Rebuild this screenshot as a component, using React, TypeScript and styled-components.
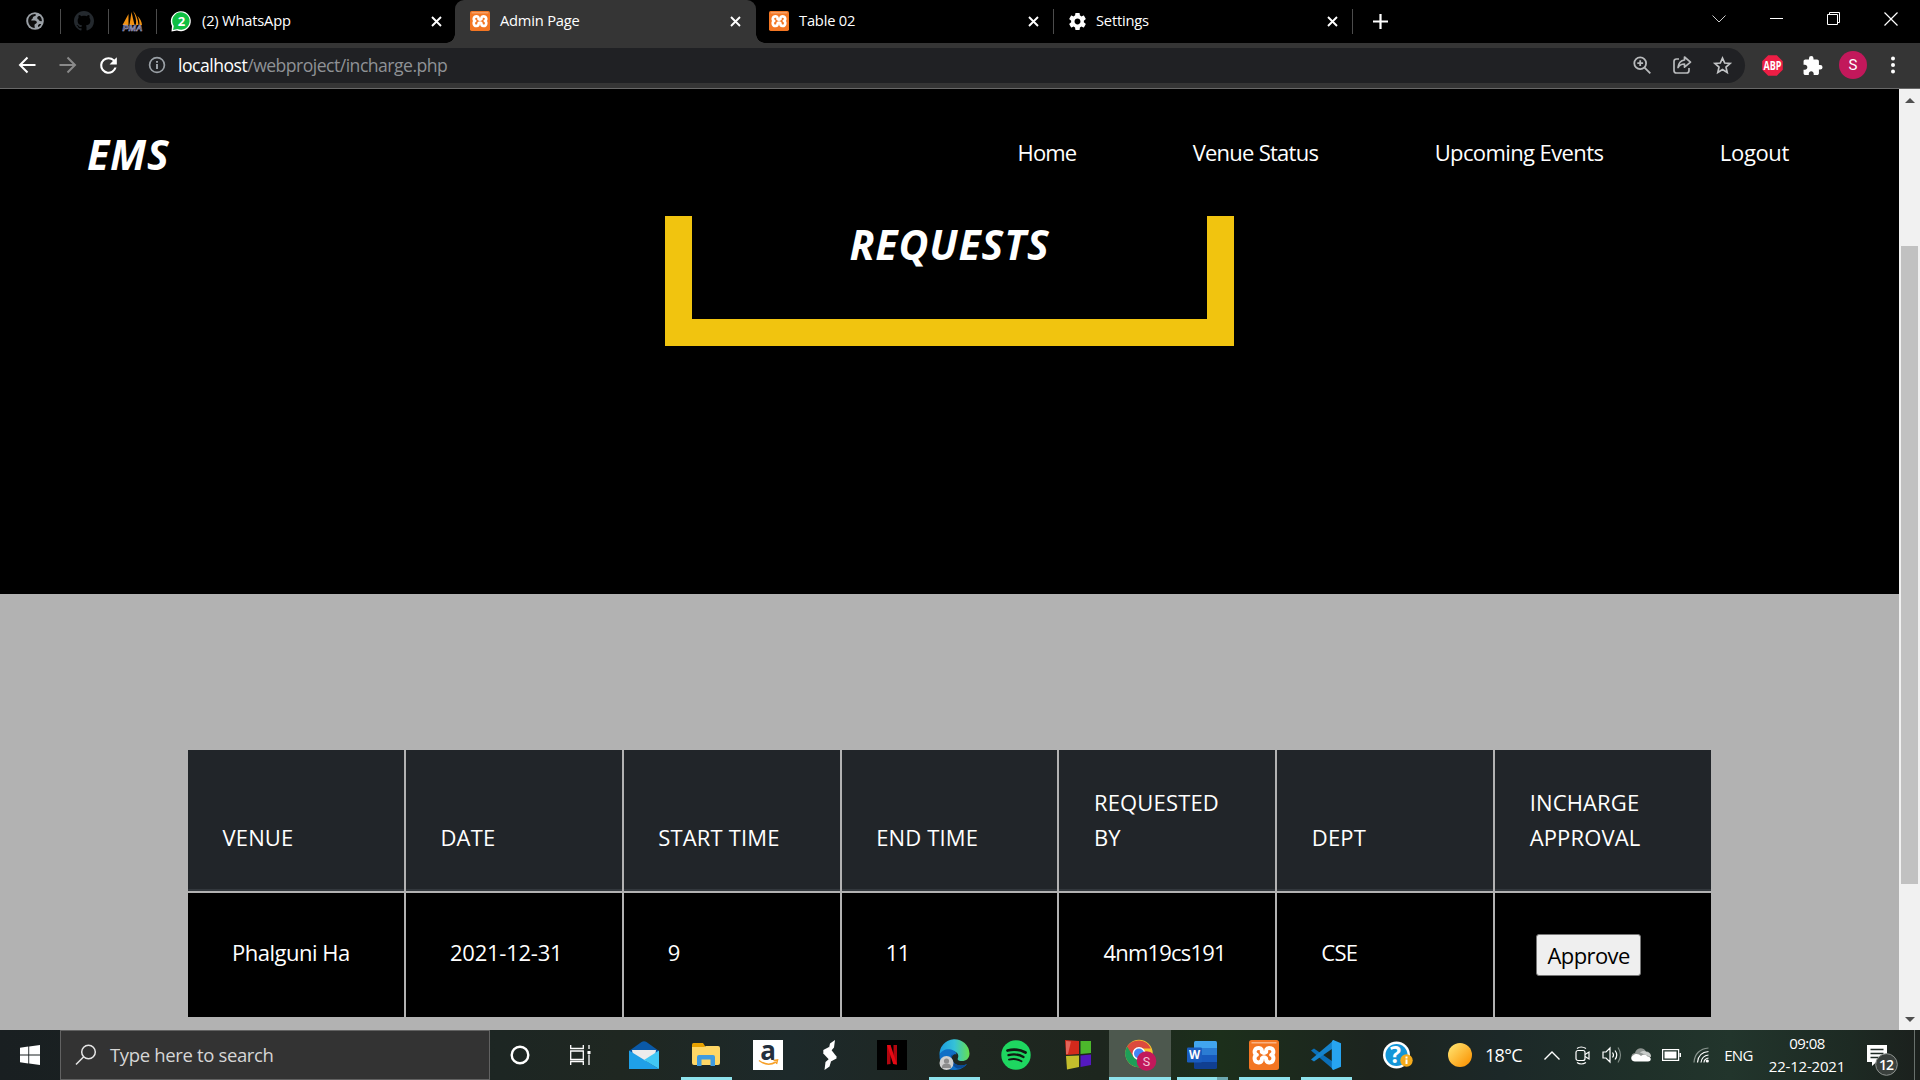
import React from "react";
import styled, { createGlobalStyle } from "styled-components";

const Global = createGlobalStyle`
  * { box-sizing: border-box; }
  html, body { margin: 0; padding: 0; background: #000; overflow: hidden; }
  body { font-family: "Open Sans", "Noto Sans", sans-serif; }
  svg { display: block; flex: none; overflow: visible; }
`;

const Screen = styled.div`
  width: 1920px;
  height: 1080px;
  display: flex;
  flex-direction: column;
  overflow: hidden;
  background: #000;
`;

const Text = styled.span<{ $size: number; $ls?: number; $color?: string }>`
  font-size: ${(p) => p.$size}px;
  letter-spacing: ${(p) => p.$ls ?? 0}px;
  color: ${(p) => p.$color ?? "#fff"};
  white-space: nowrap;
  line-height: 1.36;
`;

/* ---------- tab strip ---------- */
const TabStrip = styled.div`
  height: 43px;
  flex: none;
  display: flex;
  background: #000;
`;
const PinnedTab = styled.div<{ $w: number; $pl: number }>`
  width: ${(p) => p.$w}px;
  padding-left: ${(p) => p.$pl}px;
  padding-bottom: 1px;
  display: flex;
  align-items: center;
`;
const Divider = styled.div`
  width: 1px;
  height: 25px;
  margin-top: 9px;
  background: #4c4c4c;
`;
const Tab = styled.div<{ $w: number; $pl: number; $pr?: number; $active?: boolean }>`
  width: ${(p) => p.$w}px;
  padding: 0 ${(p) => p.$pr ?? 14}px 1px ${(p) => p.$pl}px;
  display: flex;
  align-items: center;
  gap: 10px;
  background: ${(p) => (p.$active ? "#353535" : "#000")};
  border-radius: ${(p) => (p.$active ? "9px 9px 0 0" : "0")};
`;
const TabTitle = styled.span`
  font-size: 14.7px;
  letter-spacing: -0.2px;
  line-height: 20px;
  padding-bottom: 2px;
  color: #fff;
  white-space: nowrap;
`;
const TabClose = styled.div`
  margin-left: auto;
`;
const Foot = styled.div<{ $side: "left" | "right" }>`
  width: 9px;
  align-self: flex-end;
  height: 9px;
  background: radial-gradient(
    circle at ${(p) => (p.$side === "left" ? "0 0" : "100% 0")},
    #000 8.5px,
    #353535 9px
  );
`;
const WindowButtons = styled.div`
  margin-left: auto;
  height: 37px;
  display: flex;
`;
const WindowButton = styled.div`
  width: 57.3px;
  display: flex;
  align-items: center;
  justify-content: center;
`;
const NewTab = styled.div`
  width: 55px;
  display: flex;
  align-items: center;
  justify-content: center;
`;

/* ---------- toolbar ---------- */
const Toolbar = styled.div`
  height: 46px;
  flex: none;
  display: flex;
  align-items: center;
  background: #353535;
  border-bottom: 1px solid #686868;
  padding: 0 7px 1px 7px;
`;
const ToolButton = styled.div<{ $w: number }>`
  width: ${(p) => p.$w}px;
  display: flex;
  align-items: center;
  justify-content: center;
`;
const Omnibox = styled.div`
  width: 1610px;
  height: 35px;
  margin: 0 7px 0 7px;
  border-radius: 18px;
  background: #202124;
  display: flex;
  align-items: center;
  padding-left: 13px;
`;
const Url = styled.div`
  margin-left: 12px;
  display: flex;
  padding-top: 1px;
`;
const OmniActions = styled.div`
  margin-left: auto;
  padding-right: 3px;
  display: flex;
`;
const Avatar = styled.div`
  width: 28px;
  height: 28px;
  border-radius: 50%;
  background: #c2185b;
  color: #fff;
  font: 15px/28px Roboto, sans-serif;
  text-align: center;
`;

/* ---------- page ---------- */
const Viewport = styled.div`
  height: 941px;
  flex: none;
  display: flex;
`;
const Page = styled.main`
  width: 1899px;
  height: 941px;
  overflow: hidden;
  display: flex;
  flex-direction: column;
  background: #b2b2b2;
`;
const Nav = styled.nav`
  height: 127px;
  flex: none;
  background: #000;
  display: flex;
  align-items: center;
  justify-content: space-between;
  padding: 2px 110px 0 87px;
`;
const Heading = styled.h1`
  margin: 0;
  font-size: 41px;
  line-height: 56px;
  font-weight: 700;
  font-style: italic;
  color: #fff;
  letter-spacing: 0.9px;
`;
const Links = styled.div`
  display: flex;
  gap: 116.5px;
  padding-bottom: 1px;
`;
const Hero = styled.header`
  height: 378px;
  flex: none;
  background: #000;
  display: flex;
  justify-content: center;
  align-items: flex-start;
`;
const HeroFrame = styled.div`
  width: 569px;
  height: 130px;
  border: 27px solid #f1c40f;
  border-top: 0;
  display: flex;
  justify-content: center;
`;
const Requests = styled.section`
  flex: 1;
  padding: 156px 0 0 188px;
`;
const Table = styled.table`
  width: 1523px;
  border-collapse: separate;
  border-spacing: 0;
  table-layout: fixed;
  color: #fff;
  font-size: 22.4px;
  line-height: 35px;
`;
const Th = styled.th`
  height: 143px;
  padding: 0 30px 36px 34.5px;
  font-weight: 400;
  text-align: left;
  vertical-align: bottom;
  background: #212529;
  border-bottom: 2px solid #b2b2b2;
  box-shadow: inset 0 -2px 0 #32373c;
  &:first-child { width: 216px; }
  & + & { border-left: 2px solid #b2b2b2; }
`;
const Td = styled.td`
  height: 124px;
  padding: 0 0 5px 44px;
  background: #000;
  & + & { border-left: 2px solid #b2b2b2; }
`;
const Approve = styled.button`
  display: block;
  width: 105px;
  height: 42px;
  margin: 5px 0 0 -3px;
  padding: 2px 0 0;
  background: #efefef;
  border: 1px solid #767676;
  border-radius: 3px;
  font-family: inherit;
  color: #000;
`;
const Scrollbar = styled.div`
  width: 21px;
  background: #f1f1f1;
  display: flex;
  flex-direction: column;
  align-items: center;
  padding: 9px 0 8px;
`;
const Thumb = styled.div`
  width: 17px;
  height: 638px;
  margin-top: 143px;
  margin-bottom: auto;
  background: #c1c1c1;
`;

/* ---------- taskbar ---------- */
const Taskbar = styled.div`
  height: 50px;
  flex: none;
  display: flex;
  align-items: center;
  background: linear-gradient(
    90deg, #191f21 0, #1d2623 500px, #1f2721 620px, #1d292a 790px, #1f2721 970px,
    #1d261e 1100px, #1c2f1b 1220px, #1c241f 1370px, #1c2828 1500px, #1f3029 1640px,
    #22352c 1730px, #1d2a23 1850px, #1b201d 1920px
  );
`;
const Slot = styled.div<{ $w: number; $active?: boolean }>`
  width: ${(p) => p.$w}px;
  height: 50px;
  flex: none;
  display: flex;
  flex-direction: column;
  align-items: center;
  justify-content: center;
  background: ${(p) => (p.$active ? "#4d584e" : "transparent")};
`;
const IconBox = styled.div`
  flex: 1;
  display: flex;
  align-items: center;
  padding-top: 3px;
`;
const Indicator = styled.div<{ $w: number; $split?: boolean }>`
  width: ${(p) => p.$w}px;
  height: 3px;
  background: ${(p) =>
    p.$w === 0 ? "none" : p.$split ? "linear-gradient(90deg,#8ee2ec 40px,#6ba7ae 40px)" : "#8ee2ec"};
`;
const Search = styled.div`
  width: 430px;
  height: 50px;
  flex: none;
  background: #333;
  border: 1px solid #626262;
  display: flex;
  align-items: center;
  gap: 13px;
  padding-left: 14px;
`;
const Apps = styled.div`
  display: flex;
  flex: none;
  margin-left: 3px;
`;
const Tray = styled.div`
  display: flex;
  flex: none;
  align-items: center;
  height: 50px;
`;
const TrayItem = styled.div<{ $w: number }>`
  width: ${(p) => p.$w}px;
  flex: none;
  display: flex;
  justify-content: center;
`;
const Notifications = styled.div`
  width: 66px;
  padding: 9px 0 0 20px;
`;
const Clock = styled.div`
  width: 80px;
  flex: none;
  display: flex;
  flex-direction: column;
  align-items: center;
  gap: 2px;
  padding-bottom: 1px;
`;
const ShowDesktop = styled.div`
  width: 6px;
  height: 50px;
  margin-left: auto;
  border-left: 1px solid #68706c;
`;

/* ---------- icons ---------- */
const Cross = () => (
  <svg width="11" height="11" viewBox="0 0 11 11" stroke="#fff" strokeWidth="1.9">
    <path d="M1 1l9 9M10 1l-9 9" />
  </svg>
);
const Xampp = ({ s }: { s: number }) => (
  <svg width={s} height={s} viewBox="0 0 30 30">
    <rect width="30" height="30" rx="2.5" fill="#f37623" />
    <path d="M2.500 2h25v1.500h-25z" fill="#f9b384" />
    <path
      d="M10 8c-5 0-5.600 5.200-2.200 6.800c-3.500 1.700-2.800 8 2.200 7.600c2.500-.2 3-2.400 3-4.200c1-1.200 3-1.200 4 0c0 1.800.5 4 3 4.200c5 .4 5.700-5.900 2.200-7.600c3.400-1.600 2.800-6.800-2.200-6.800c-2.800 0-3 2.300-2.800 4c-1.200 1-3.200 1-4.400 0c.2-1.700 0-4-2.800-4z"
      fill="none"
      stroke="#fff"
      strokeWidth="4"
      strokeLinejoin="round"
    />
  </svg>
);
const Globe = () => (
  <svg width="18" height="18" viewBox="0 0 18 18">
    <circle cx="9" cy="9" r="8.800" fill="#9aa0a6" />
    <path d="M2.200 8c.5-3.500 3-5.800 6.800-6c1 .3 1.200 1.300.2 2c-1.700.3-2.500 1-2.500 2.500c-.8 1-1.500.8-1.500 2c1.500 0 5.300-.5 5.600 1.500c.2 2-2.300 1.500-2.300 3.300c0 1.500.5 2 .2 2.700c-4-.3-6.800-4-6.500-8z" fill="#0c0c0c" />
    <path d="M11.500 5c.5-1 2-1.300 2.700-.6c1.300 1.300 1.700 3 1.700 4.600c-1.200.8-3-.3-3.200-1.500c-1.200-.3-2-1.300-1.200-2.500z M12 13.500c.3-1.500 2-2 3.200-1.300c-.7 1.300-1.800 2.300-3 2.900z" fill="#0c0c0c" />
  </svg>
);
const Github = () => (
  <svg width="20" height="20" viewBox="0 0 16 16" fill="#24292e">
    <path d="M8 0C3.580 0 0 3.580 0 8c0 3.540 2.290 6.530 5.470 7.590.4.070.55-.17.550-.38 0-.19-.01-.82-.01-1.490-2.010.37-2.530-.49-2.690-.94-.09-.23-.48-.94-.82-1.130-.28-.15-.68-.52-.01-.53.63-.01 1.080.58 1.230.82.72 1.210 1.870.87 2.330.66.070-.52.280-.87.510-1.070-1.780-.2-3.640-.89-3.640-3.950 0-.87.310-1.590.82-2.150-.08-.2-.36-1.020.08-2.120 0 0 .67-.21 2.200.82.640-.18 1.320-.27 2-.27s1.360.09 2 .27c1.530-1.040 2.200-.82 2.200-.82.440 1.100.16 1.920.08 2.120.51.56.82 1.270.82 2.150 0 3.070-1.870 3.750-3.650 3.950.29.25.54.73.54 1.480 0 1.070-.01 1.930-.01 2.200 0 .21.15.46.55.38A8.010 8.010 0 0 0 16 8c0-4.420-3.580-8-8-8z" />
  </svg>
);
const Pma = () => (
  <svg width="21" height="20" viewBox="0 0 21 20">
    <path d="M6.500 3L.5 14h6zM9.500 1L7.500 14h5zM11 0c2.500 4 3.500 9 3 14h2.500C16 8 14 3 11 0zM15.500 5c1.500 3 2 6 2 9H20c0-3-2-6.500-4.500-9z" fill="#f29111" />
    <text x="10.500" y="19.800" textAnchor="middle" textLength="20" lengthAdjust="spacingAndGlyphs" fontFamily="Liberation Sans" fontWeight="700" fontStyle="italic" fontSize="9.500" fill="#33335c" stroke="#b9b9d6" strokeWidth=".5">PMA</text>
  </svg>
);
const WhatsApp = () => (
  <svg width="21" height="21" viewBox="0 0 21 21">
    <path d="M.5 20.500L1 15A10 10 0 1 1 6 19.500z" fill="#fff" />
    <path d="M2 19l.8-4A8.700 8.700 0 1 1 6.500 18z" fill="#0fbf43" />
    <text x="10.500" y="15" textAnchor="middle" fontFamily="Open Sans" fontWeight="700" fontSize="13" fill="#fff">2</text>
  </svg>
);
const Gear = () => (
  <svg width="17" height="17" viewBox="2 2 20 20" fill="#fff">
    <path d="M19.430 12.980c.04-.32.07-.64.070-.98s-.03-.66-.07-.98l2.110-1.650c.19-.15.24-.42.120-.64l-2-3.460c-.12-.22-.39-.3-.61-.22l-2.490 1c-.52-.4-1.080-.73-1.690-.98l-.38-2.650C14.460 2.180 14.250 2 14 2h-4c-.25 0-.46.18-.49.42l-.38 2.650c-.61.25-1.170.59-1.690.98l-2.490-1c-.23-.09-.49 0-.61.22l-2 3.460c-.13.22-.07.49.12.64l2.110 1.650c-.04.32-.07.65-.07.98s.03.66.07.98l-2.110 1.650c-.19.15-.24.42-.12.64l2 3.460c.12.22.39.3.61.22l2.490-1c.52.4 1.080.73 1.690.98l.38 2.650c.03.24.24.42.49.42h4c.25 0 .46-.18.49-.42l.38-2.650c.61-.25 1.170-.59 1.690-.98l2.490 1c.23.09.49 0 .61-.22l2-3.460c.12-.22.07-.49-.12-.64l-2.110-1.650zM12 15.500c-1.930 0-3.500-1.570-3.500-3.500s1.570-3.500 3.500-3.500 3.500 1.570 3.500 3.500-1.570 3.500-3.500 3.500z" />
  </svg>
);
const Arrow = ({ back }: { back?: boolean }) => (
  <svg width="18" height="18" viewBox="0 0 18 18" fill="none" stroke={back ? "#fff" : "#8a8a8a"} strokeWidth="2">
    <path d={back ? "M17.500 9H2.500M9.500 1.500L2 9L9.500 16.500" : "M.5 9h15M8.500 1.500L16 9L8.500 16.500"} />
  </svg>
);
const Reload = () => (
  <svg width="25" height="25" viewBox="0 0 24 24" fill="#fff">
    <path d="M17.650 6.350A7.960 7.960 0 0 0 12 4a8 8 0 1 0 7.730 10h-2.080A6 6 0 1 1 12 6c1.660 0 3.140.69 4.220 1.780L13 11h7V4l-2.350 2.350z" />
  </svg>
);
const Info = () => (
  <svg width="18" height="18" viewBox="0 0 18 18" fill="none" stroke="#9aa0a6" strokeWidth="1.700">
    <circle cx="9" cy="9" r="7.400" />
    <path d="M9 8v5M9 5v1.800" strokeWidth="2" />
  </svg>
);
const Magnify = () => (
  <svg width="18" height="18" viewBox="0 0 18 18" fill="none" stroke="#b8babc" strokeWidth="1.800">
    <circle cx="7.200" cy="7.200" r="5.900" />
    <path d="M11.300 11.300l6 6M4.300 7.200h5.800M7.200 4.300v5.800" />
  </svg>
);
const Share = () => (
  <svg width="20" height="20" viewBox="0 0 20 20" fill="none" stroke="#b8babc" strokeWidth="1.700" strokeLinejoin="round">
    <path d="M7 4H4.500Q2 4 2 6.500v9Q2 18 4.500 18h10q2.500 0 2.500-2.500V13" />
    <path d="M12.500 2l6 5.200l-6 5V9c-3 0-5 1-6.500 3.500C6.500 8.500 9 5.500 12.500 5z" />
  </svg>
);
const Star = () => (
  <svg width="19" height="18" viewBox="0 0 19 18" fill="none" stroke="#c2c4c6" strokeWidth="1.700">
    <path d="M9.500 2l2.200 5 5.400.5-4.100 3.600 1.200 5.300-4.700-2.800-4.700 2.800 1.200-5.300-4.100-3.600 5.400-.5z" />
  </svg>
);
const Abp = () => (
  <svg width="21" height="21" viewBox="0 0 21 21">
    <path d="M6.200.3h8.600l6 6v8.500l-6 6H6.200l-6-6V6.200z" fill="#ed1e45" />
    <text x="10.500" y="14.500" textAnchor="middle" textLength="18" lengthAdjust="spacingAndGlyphs" fontFamily="Open Sans" fontWeight="700" fontSize="11.500" fill="#fff">ABP</text>
  </svg>
);
const Puzzle = () => (
  <svg width="19" height="19" viewBox="2.500 1 21 21" fill="#fff">
    <path d="M20.500 11H19V7c0-1.100-.9-2-2-2h-4V3.500a2.500 2.500 0 0 0-5 0V5H4c-1.100 0-1.990.9-1.990 2v3.800H3.500c1.490 0 2.700 1.210 2.700 2.700s-1.210 2.700-2.700 2.700H2V20c0 1.100.9 2 2 2h3.800v-1.500c0-1.490 1.210-2.700 2.700-2.700s2.700 1.210 2.700 2.700V22H17c1.100 0 2-.9 2-2v-4h1.500a2.500 2.500 0 0 0 0-5z" />
  </svg>
);
const Dots = () => (
  <svg width="6" height="18" viewBox="0 0 6 18" fill="#fff">
    <circle cx="3" cy="2.500" r="2" /><circle cx="3" cy="9" r="2" /><circle cx="3" cy="15.500" r="2" />
  </svg>
);
const Triangle = ({ up }: { up?: boolean }) => (
  <svg width="10" height="5" viewBox="0 0 10 5" fill="#505050">
    <path d={up ? "M5 0l5 5H0z" : "M0 0h10L5 5z"} />
  </svg>
);
const Mail = () => (
  <svg width="30" height="28" viewBox="0 0 30 28">
    <path d="M0 10L12.500 1Q15-.5 17.500 1L30 10v6H0z" fill="#0a59a8" />
    <path d="M3 9h24l-1 6-11 6L4 15z" fill="#ececec" />
    <path d="M0 9.500L30 28H0z" fill="#1fa0e8" />
    <path d="M30 9.500L15 19l15 9z" fill="#41c8f4" />
  </svg>
);
const Folder = () => (
  <svg width="28" height="24" viewBox="0 0 28 24">
    <path d="M0 1.500Q0 0 1.500 0H11l2 3v4H0z" fill="#e8a200" />
    <path d="M0 4h12l2-1h12q2 0 2 2v15q0 2-2 2H2q-2 0-2-2z" fill="#ffd766" />
    <path d="M5 23V14q0-2 2-2h14q2 0 2 2v9h-4.500v-6.500h-9V23z" fill="#3f9be0" />
  </svg>
);
const Amazon = () => (
  <svg width="30" height="30" viewBox="0 0 30 30">
    <rect width="30" height="30" fill="#fff" />
    <text x="15" y="19.500" textAnchor="middle" fontFamily="Open Sans" fontWeight="700" fontSize="26" fill="#232f3e">a</text>
    <path d="M6 20.500q8.500 6.500 17 1.500M20.500 20.500l4-.5-1 4" fill="none" stroke="#f7a028" strokeWidth="1.500" />
  </svg>
);
const SBolt = () => (
  <svg width="14" height="30" viewBox="0 0 14 30" fill="#fff">
    <path d="M6 7L.3 10v3.500l7.500 8 5.700-3v-2z" />
    <path d="M12 0L7 3.500 6 8l1.500 3.500L11 7.500zM1.500 30l5-3.500 1.500-5-1.500-3L2.500 22z" />
  </svg>
);
const Netflix = () => (
  <svg width="30" height="30" viewBox="0 0 30 30">
    <rect width="30" height="30" fill="#000" />
    <path d="M10 5h3.500v19l-3.500.6zM16.500 5H20v19.600l-3.500-.6z" fill="#b1060f" />
    <path d="M10 5h3.500L20 24.600l-3.800-.6z" fill="#e50914" />
  </svg>
);
const Edge = () => (
  <svg width="31" height="30" viewBox="0 0 31 30">
    <defs>
      <linearGradient id="edgeTop" x1="0" x2="1">
        <stop offset="0" stopColor="#1b9de2" /><stop offset=".5" stopColor="#35c1d8" /><stop offset="1" stopColor="#66e04f" />
      </linearGradient>
    </defs>
    <path d="M.5 15A15 15 0 0 1 30.500 13.500c0 5-3.500 7.500-7.500 7.500-4 0-5-1.500-4-3 1.500-4-2-7-6-7S2 12 .5 15z" fill="url(#edgeTop)" />
    <path d="M.5 15C2 10 8 8.500 12 9.500c4 1 5.500 3 5.500 5-3-1-6 2-4 6 2 5 8 6.500 14.500 3.500C24 29 19 30 15 30 6 30 0 23 .5 15z" fill="#0f6fc6" />
    <path d="M12.500 15c-2 5 0 11 6 13.500 3.500.5 7-1.500 9.500-4.500-7 3-12.500 1-14.500-3.500-.8-2-.8-4 .5-6z" fill="#0b4a96" />
    <circle cx="7.500" cy="23" r="7" fill="#cfcfcf" />
    <circle cx="7.500" cy="21" r="2.600" fill="#8c8c8c" /><path d="M3 27q0-3.500 4.500-3.500T12 27v1H3z" fill="#8c8c8c" />
  </svg>
);
const Spotify = () => (
  <svg width="30" height="30" viewBox="0 0 30 30">
    <circle cx="15" cy="15" r="14.700" fill="#1ed760" />
    <g fill="none" stroke="#101a12" strokeLinecap="round">
      <path d="M6.500 10.500q9.500-2.500 18 2" strokeWidth="2.800" />
      <path d="M7.500 15.200q8-2.200 15 1.800" strokeWidth="2.300" />
      <path d="M8 19.600q7-1.700 12.500 1.600" strokeWidth="1.900" />
    </g>
  </svg>
);
const Squares = () => (
  <svg width="28" height="30" viewBox="0 0 28 30">
    <path d="M1 0l14 1v13L2 15z" fill="#d3291c" /><path d="M16.500 1H27v12l-10.500 1z" fill="#4cb82c" />
    <path d="M2 16l13-.5V27L3 29.500z" fill="#c3bd2c" /><path d="M16.500 15.500L27 14.500V25l-10.500 2z" fill="#5419c0" />
    <path d="M2 1l5 .5L4 14H2z" fill="#f5a198" opacity=".5" />
  </svg>
);
const Chrome = () => (
  <svg width="30" height="32" viewBox="0 0 30 32">
    <circle cx="14" cy="14.500" r="13.700" fill="#f7c72f" />
    <path d="M14 14.500l-11.900-7A13.700 13.700 0 0 0 14 28.200l6-10z" fill="#1e9e58" />
    <path d="M2.100 7.600L8.500 18l5.500-8.500h11.900A13.700 13.700 0 0 0 2.100 7.600z" fill="#dc4a3d" />
    <circle cx="14" cy="14.500" r="6.500" fill="#fff" /><circle cx="14" cy="14.500" r="5" fill="#4285f4" />
    <circle cx="21.500" cy="22" r="9.800" fill="#c2185b" />
    <text x="21.500" y="26.500" textAnchor="middle" fontFamily="Roboto" fontSize="12.500" fill="#f4c6d8">S</text>
  </svg>
);
const Word = () => (
  <svg width="30" height="28" viewBox="0 0 30 28">
    <path d="M7 1.500Q7 0 8.500 0h20Q30 0 30 1.500V7H7z" fill="#41a5ee" />
    <path d="M7 7h23v7H7z" fill="#2b7cd3" /><path d="M7 14h23v7H7z" fill="#185abd" />
    <path d="M7 21h23v5.500q0 1.500-1.500 1.500h-20Q7 28 7 26.500z" fill="#103f91" />
    <rect y="6.500" width="15" height="15" rx="1.200" fill="#1a5dbe" />
    <text x="7.500" y="18" textAnchor="middle" fontFamily="Open Sans" fontWeight="700" fontSize="11.500" fill="#fff">W</text>
  </svg>
);
const Code = () => (
  <svg width="30" height="30" viewBox="0 0 30 30">
    <path d="M0 10.500L3 8.500 23 22.500V30z" fill="#0b6fb8" />
    <path d="M0 19.500L3 21.500 23 7.500V0z" fill="#1583cc" />
    <path d="M22.300 0L30 3.300v23.400L22.300 30q-1.500-.3-1.500-2V2q0-1.700 1.500-2z" fill="#27a4f0" />
  </svg>
);
const Help = () => (
  <svg width="30" height="28" viewBox="0 0 30 28">
    <circle cx="13.500" cy="14" r="13.500" fill="#fff" /><circle cx="13.500" cy="14" r="11" fill="#1496d8" />
    <text x="12.500" y="22" textAnchor="middle" fontFamily="Open Sans" fontWeight="700" fontSize="23" fill="#fff">?</text>
    <circle cx="23.500" cy="19.500" r="6.200" fill="#f5ab1c" />
    <path d="M23.500 18.500v4.500M23.500 15.500v2" stroke="#fff" strokeWidth="2" />
  </svg>
);
const Sun = () => (
  <svg width="24" height="24" viewBox="0 0 24 24">
    <defs><linearGradient id="sun" x1="0" y1="0" x2="1" y2="1"><stop offset=".1" stopColor="#ffe06b" /><stop offset=".9" stopColor="#fb9505" /></linearGradient></defs>
    <circle cx="12" cy="12" r="12" fill="url(#sun)" />
  </svg>
);
const MeetNow = () => (
  <svg width="15" height="19" viewBox="0 0 15 19" fill="none" stroke="#fff" strokeWidth="1.200">
    <rect x="1" y="4.500" width="9" height="10" rx="2" /><path d="M10 8.500l4-2.500v7l-4-2.500M2 2.500q4-3 9 0M2 16.500q4 3 9 0" />
  </svg>
);
const Volume = () => (
  <svg width="20" height="18" viewBox="0 0 20 18" fill="none" stroke="#fff" strokeWidth="1.200">
    <path d="M1 6h3l4-4v14l-4-4H1zM10.500 6.500q2 2.500 0 5M13 4.500q3.500 4.500 0 9" /><path d="M16 1.500q5 7.500 0 15" stroke="#7e8a84" />
  </svg>
);
const Cloud = () => (
  <svg width="20" height="14" viewBox="0 0 20 14">
    <path d="M2 11C-1 9 1 5 4 5c1-5 8-7 11-1.500 3 0 5 2 5 5L8 13z" fill="#8e9491" />
    <path d="M9 4.500c2-2 5-2 6.500-.5C19 4.500 20 7 20 9z" fill="#c8ccca" />
    <path d="M4 13.500c-4 0-5-4.500-2-6C5 5 8 6 10 8c2-2 5.500-1.500 6.500.5 4 0 4.500 5 .5 5z" fill="#fff" />
  </svg>
);
const Battery = () => (
  <svg width="19" height="12" viewBox="0 0 19 12">
    <rect x=".6" y=".6" width="16" height="10.800" fill="none" stroke="#fff" strokeWidth="1.200" /><rect x="2.500" y="2.500" width="12" height="7" fill="#fff" /><path d="M17.500 4h1.500v4h-1.500z" fill="#fff" />
  </svg>
);
const Wifi = () => (
  <svg width="17" height="16" viewBox="0 0 17 16" fill="none" strokeWidth="1.200">
    <path d="M1 15.500C1.500 7 7 1.500 15.500 1" stroke="#8b9690" /><path d="M4.500 15.500C5 9 9 5 15.500 4.500M8 15.500c.5-4 3-7 7.500-7.500M11 15.500c0-2 2-4 4.500-4.500" stroke="#fff" /><circle cx="14.300" cy="14" r="1.600" fill="#fff" />
  </svg>
);
const Notice = () => (
  <svg width="32" height="32" viewBox="0 0 32 32">
    <path d="M0 1h20v17H9.500L5 22v-4H0z" fill="#fff" />
    <path d="M3.500 5.500h13M3.500 9.500h13M3.500 13.500h8" stroke="#1f2a25" strokeWidth="1.300" />
    <circle cx="19.500" cy="20.500" r="10.800" fill="#3a403d" stroke="#8b908d" />
    <text x="19.500" y="26" textAnchor="middle" fontFamily="Open Sans" fontWeight="600" fontSize="14" textLength="15" fill="#fff">12</text>
  </svg>
);

const links: [string, number][] = [
  ["Home", -0.9],
  ["Venue Status", -0.75],
  ["Upcoming Events", -0.6],
  ["Logout", -0.35],
];
const columns: [string, string?][] = [
  ["VENUE"], ["DATE"], ["START TIME"], ["END TIME"], ["REQUESTED", "BY"], ["DEPT"], ["INCHARGE", "APPROVAL"],
];
const rows: [string, number][][] = [
  [["Phalguni Ha", -0.5], ["2021-12-31", -0.25], ["9", 0], ["11", -0.5], ["4nm19cs191", -0.8], ["CSE", -0.7]],
];
const apps = [
  { icon: <Mail />, bar: 0 },
  { icon: <Folder />, bar: 51 },
  { icon: <Amazon />, bar: 0 },
  { icon: <SBolt />, bar: 0 },
  { icon: <Netflix />, bar: 0 },
  { icon: <Edge />, bar: 51 },
  { icon: <Spotify />, bar: 0 },
  { icon: <Squares />, bar: 0 },
  { icon: <Chrome />, bar: 62, active: true },
  { icon: <Word />, bar: 51, split: true },
  { icon: <Xampp s={30} />, bar: 51 },
  { icon: <Code />, bar: 51 },
];

export default function App() {
  return (
    <Screen>
      <Global />
      <TabStrip>
        <PinnedTab $w={60} $pl={26}><Globe /></PinnedTab>
        <Divider />
        <PinnedTab $w={47} $pl={13}><Github /></PinnedTab>
        <Divider />
        <PinnedTab $w={47} $pl={13}><Pma /></PinnedTab>
        <Divider />
        <Tab $w={289} $pl={14} $pr={4}>
          <WhatsApp />
          <TabTitle>(2) WhatsApp</TabTitle>
          <TabClose><Cross /></TabClose>
        </Tab>
        <Foot $side="left" />
        <Tab $w={301} $pl={15} $pr={15} $active>
          <Xampp s={20} />
          <TabTitle>Admin Page</TabTitle>
          <TabClose><Cross /></TabClose>
        </Tab>
        <Foot $side="right" />
        <Tab $w={288} $pl={4}>
          <Xampp s={20} />
          <TabTitle>Table 02</TabTitle>
          <TabClose><Cross /></TabClose>
        </Tab>
        <Divider />
        <Tab $w={298} $pl={15}>
          <Gear />
          <TabTitle>Settings</TabTitle>
          <TabClose><Cross /></TabClose>
        </Tab>
        <Divider />
        <NewTab>
          <svg width="15" height="15" stroke="#fff" strokeWidth="2.200"><path d="M7.500 0v15M0 7.500h15" /></svg>
        </NewTab>
        <WindowButtons>
          <WindowButton><svg width="14" height="8" fill="none" stroke="#ccc"><path d="M.5.5L7 7L13.500.5" /></svg></WindowButton>
          <WindowButton><svg width="13" height="1"><rect width="13" height="1" fill="#fff" /></svg></WindowButton>
          <WindowButton><svg width="14" height="13" fill="none" stroke="#fff"><path d="M.5 2.500h10v10H.5zM2.500 2.500v-2h10v10h-2" /></svg></WindowButton>
          <WindowButton><svg width="14" height="14" stroke="#fff" strokeWidth="1.200"><path d="M.5.5l13 13M13.500.5l-13 13" /></svg></WindowButton>
        </WindowButtons>
      </TabStrip>
      <Toolbar>
        <ToolButton $w={40}><Arrow back /></ToolButton>
        <ToolButton $w={41}><Arrow /></ToolButton>
        <ToolButton $w={40}><Reload /></ToolButton>
        <Omnibox>
          <Info />
          <Url>
            <Text $size={17.6} $ls={-0.5}>localhost</Text>
            <Text $size={17.6} $ls={-0.52} $color="#8f9296">/webproject/incharge.php</Text>
          </Url>
          <OmniActions>
            <ToolButton $w={40}><Magnify /></ToolButton>
            <ToolButton $w={40}><Share /></ToolButton>
            <ToolButton $w={40}><Star /></ToolButton>
          </OmniActions>
        </Omnibox>
        <ToolButton $w={41}><Abp /></ToolButton>
        <ToolButton $w={40}><Puzzle /></ToolButton>
        <ToolButton $w={40}><Avatar>S</Avatar></ToolButton>
        <ToolButton $w={39}><Dots /></ToolButton>
      </Toolbar>
      <Viewport>
        <Page>
          <Nav>
            <Heading as="div">EMS</Heading>
            <Links>
              {links.map(([label, ls]) => (
                <Text key={label} $size={22} $ls={ls}>{label}</Text>
              ))}
            </Links>
          </Nav>
          <Hero>
            <HeroFrame><Heading>REQUESTS</Heading></HeroFrame>
          </Hero>
          <Requests>
            <Table>
              <thead>
                <tr>
                  {columns.map(([first, second]) => (
                    <Th key={first}>
                      <Text $size={22} $ls={0.15}>{first}{second && <><br />{second}</>}</Text>
                    </Th>
                  ))}
                </tr>
              </thead>
              <tbody>
                {rows.map((r, i) => (
                  <tr key={i}>
                    {r.map(([value, ls]) => <Td key={value}><Text $size={22} $ls={ls}>{value}</Text></Td>)}
                    <Td><Approve><Text $size={22} $ls={-0.6} $color="#000">Approve</Text></Approve></Td>
                  </tr>
                ))}
              </tbody>
            </Table>
          </Requests>
        </Page>
        <Scrollbar>
          <Triangle up />
          <Thumb />
          <Triangle />
        </Scrollbar>
      </Viewport>
      <Taskbar>
        <Slot $w={60}>
          <svg width="20" height="20" viewBox="0 0 20 20" fill="#fff"><path d="M0 2.800L8.300 1.600V9.500H0zM9.200 1.500L20 0v9.500H9.200zM0 10.500h8.300v7.900L0 17.200zM9.200 10.500H20V20L9.200 18.500z" /></svg>
        </Slot>
        <Search>
          <svg width="22" height="22" viewBox="0 0 22 22" fill="none" stroke="#e6e6e6" strokeWidth="1.500"><circle cx="13.500" cy="8" r="6.800" /><path d="M8.700 12.800L1 20.500" /></svg>
          <Text $size={18.5} $ls={-0.35} $color="#d6d6d6">Type here to search</Text>
        </Search>
        <Slot $w={60}>
          <svg width="20" height="20" fill="none" stroke="#fff" strokeWidth="2.400"><circle cx="10" cy="10" r="8.300" /></svg>
        </Slot>
        <Slot $w={60}>
          <svg width="21" height="20" fill="none" stroke="#fff" strokeWidth="1.300"><path d="M.7 0v3.500h12.600V0M.7 6h12.600v8.500H.7zM.7 20v-3.500h12.600V20M19 0v4M19 9.500V20" /><rect x="17.500" y="6" width="3" height="3" fill="#fff" stroke="none" /></svg>
        </Slot>
        <Apps>
          {apps.map((a, i) => (
            <Slot key={i} $w={62} $active={a.active}>
              <IconBox>{a.icon}</IconBox>
              <Indicator $w={a.bar} $split={a.split} />
            </Slot>
          ))}
        </Apps>
        <Tray>
          <TrayItem $w={82}><Help /></TrayItem>
          <TrayItem $w={42}><Sun /></TrayItem>
          <TrayItem $w={45}><Text $size={18} $ls={-0.6}>18°C</Text></TrayItem>
          <TrayItem $w={51}><svg width="16" height="9" fill="none" stroke="#fff" strokeWidth="1.400"><path d="M.5 8.500L8 1l7.500 7.500" /></svg></TrayItem>
          <TrayItem $w={11}><MeetNow /></TrayItem>
          <TrayItem $w={47}><Volume /></TrayItem>
          <TrayItem $w={12}><Cloud /></TrayItem>
          <TrayItem $w={49}><Battery /></TrayItem>
          <TrayItem $w={11}><Wifi /></TrayItem>
          <TrayItem $w={63}><Text $size={15} $ls={-0.6}>ENG</Text></TrayItem>
          <Clock style={{ marginLeft: -3 }}>
            <Text $size={15} $ls={-0.5}>09:08</Text>
            <Text $size={15} $ls={-0.2}>22-12-2021</Text>
          </Clock>
          <Notifications><Notice /></Notifications>
        </Tray>
        <ShowDesktop />
      </Taskbar>
    </Screen>
  );
}
